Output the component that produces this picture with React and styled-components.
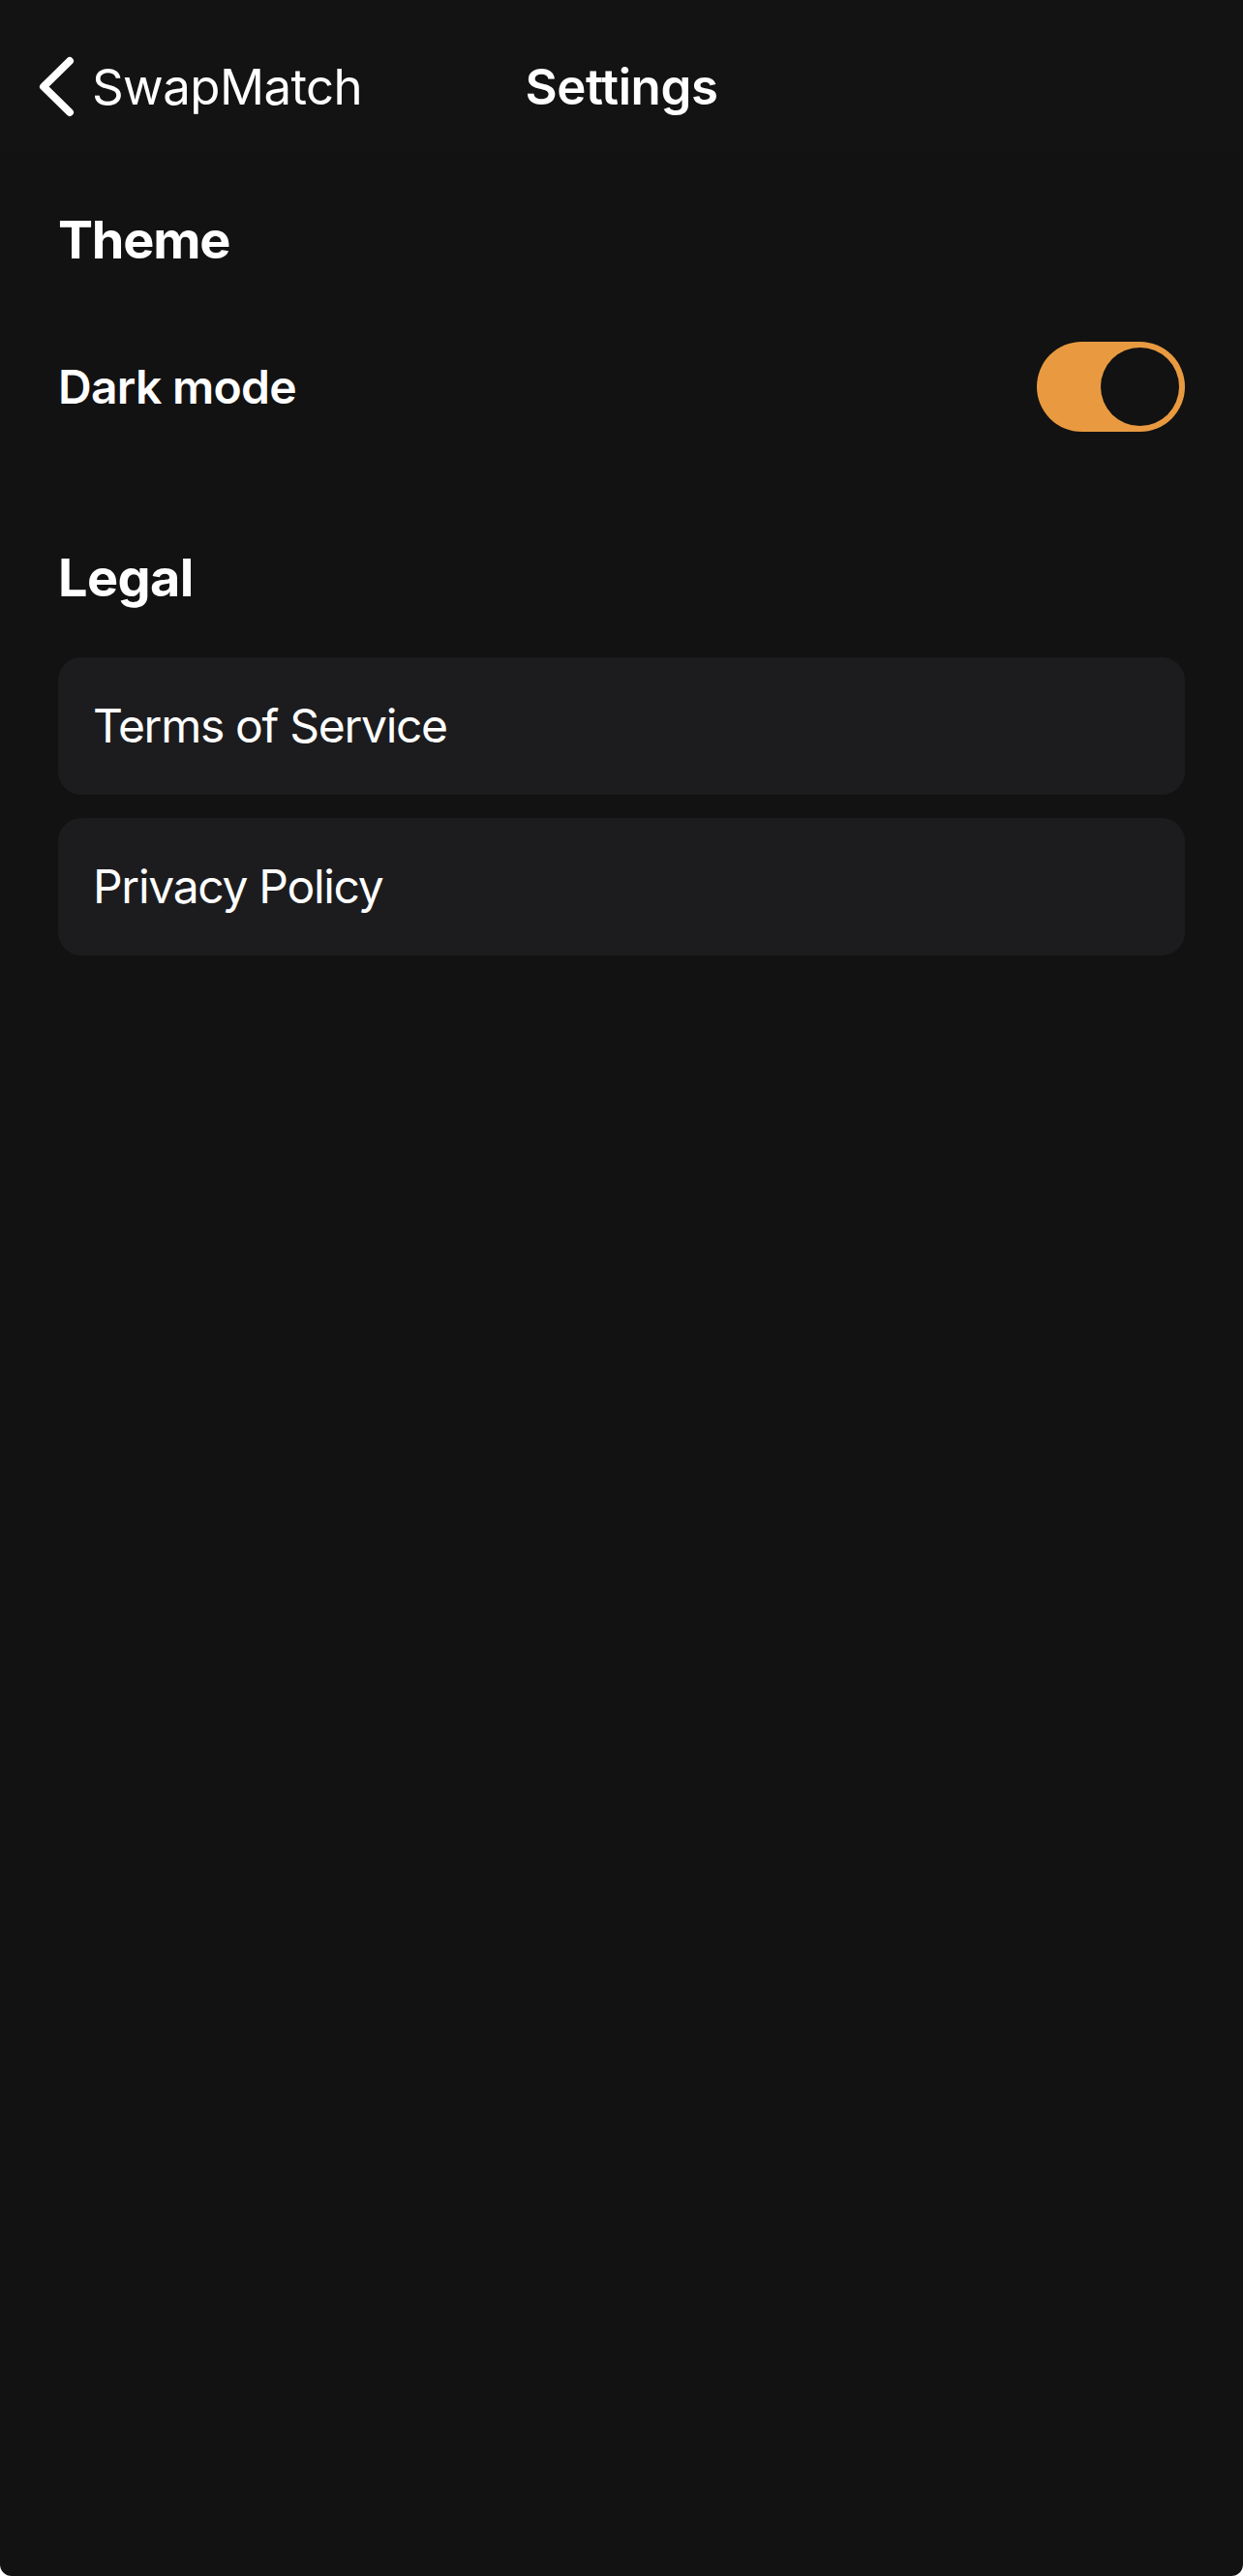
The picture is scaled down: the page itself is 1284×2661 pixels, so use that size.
import React, { useState } from "react";
import styled, { createGlobalStyle } from "styled-components";

const Global = createGlobalStyle`
  html, body { margin: 0; padding: 0; background: #ffffff; }
  body { font-family: Inter, "Noto Sans", "Liberation Sans", sans-serif; -webkit-font-smoothing: antialiased; }
  * { box-sizing: border-box; }
`;

const Screen = styled.div`
  width: 1284px;
  min-height: 2661px;
  background: #121212;
  color: #ffffff;
  border-bottom-left-radius: 12px;
  border-bottom-right-radius: 12px;
  display: flex;
  flex-direction: column;
`;

const NavBar = styled.header`
  height: 156px;
  padding: 60px 38px 0 38px;
  display: grid;
  grid-template-columns: 1fr auto 1fr;
  align-items: start;
  background: #131313;
`;

const BackButton = styled.button`
  display: flex;
  align-items: center;
  gap: 13px;
  height: 60px;
  padding: 0;
  border: 0;
  background: none;
  color: #ffffff;
  font-family: inherit;
  font-size: 51px;
  line-height: 60px;
  font-weight: 400;
  letter-spacing: -0.6px;
  cursor: pointer;
  justify-self: start;
`;

const Title = styled.h1`
  margin: 0;
  font-size: 51px;
  line-height: 60px;
  font-weight: 600;
  letter-spacing: -0.4px;
`;

const Content = styled.main`
  padding: 60px 60px 0 60px;
  display: flex;
  flex-direction: column;
`;

const SectionTitle = styled.h2`
  margin: 0;
  font-size: 54px;
  line-height: 64px;
  font-weight: 700;
  letter-spacing: ${(p) => p.$spacing ?? -0.6}px;
  margin-top: ${(p) => p.$top || 0}px;
`;

const ToggleRow = styled.div`
  display: flex;
  align-items: center;
  justify-content: space-between;
  height: 93px;
  margin-top: 73px;
`;

const RowLabel = styled.span`
  font-size: 48px;
  line-height: 93px;
  font-weight: 600;
  letter-spacing: -0.7px;
`;

const Switch = styled.button`
  width: 153px;
  height: 93px;
  border-radius: 46.5px;
  border: 0;
  padding: 6px;
  background: ${(p) => (p.$on ? "#E99A40" : "#39393D")};
  display: flex;
  justify-content: ${(p) => (p.$on ? "flex-end" : "flex-start")};
  cursor: pointer;
`;

const Knob = styled.span`
  width: 81px;
  height: 81px;
  border-radius: 50%;
  background: #121212;
`;

const List = styled.div`
  display: flex;
  flex-direction: column;
  gap: 24px;
  margin-top: 50px;
`;

const LinkCard = styled.a`
  display: block;
  height: 142px;
  padding-left: 36px;
  border-radius: 24px;
  background: #1C1C1E;
  color: #ffffff;
  text-decoration: none;
  font-size: 48px;
  line-height: 142px;
  font-weight: 400;
  letter-spacing: -1.3px;
`;

const Chevron = () => (
  <svg width="44" height="66" viewBox="0 0 44 66" fill="none">
    <path d="M34 6 L7 32.5 L34 59" stroke="#ffffff" strokeWidth="8" strokeLinecap="round" strokeLinejoin="round" />
  </svg>
);

export default function App() {
  const [dark, setDark] = useState(true);
  return (
    <>
      <Global />
      <Screen>
        <NavBar>
          <BackButton>
            <Chevron />
            SwapMatch
          </BackButton>
          <Title>Settings</Title>
          <span />
        </NavBar>
        <Content>
          <SectionTitle $spacing={-1.2}>Theme</SectionTitle>
          <ToggleRow>
            <RowLabel>Dark mode</RowLabel>
            <Switch $on={dark} onClick={() => setDark(!dark)} aria-label="Dark mode">
              <Knob />
            </Switch>
          </ToggleRow>
          <SectionTitle $top={119}>Legal</SectionTitle>
          <List>
            <LinkCard href="#">Terms of Service</LinkCard>
            <LinkCard href="#">Privacy Policy</LinkCard>
          </List>
        </Content>
      </Screen>
    </>
  );
}
